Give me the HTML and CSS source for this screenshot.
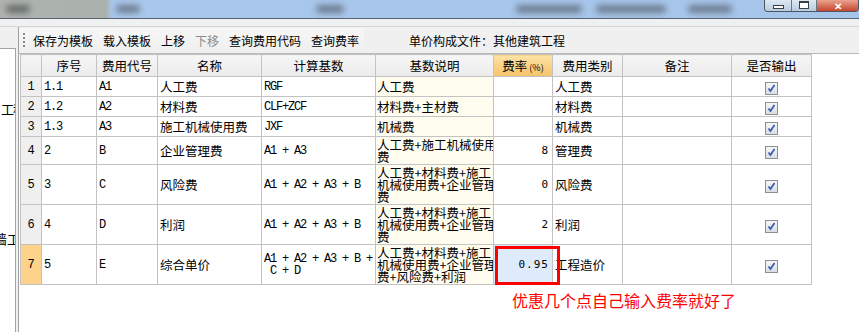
FILE: index.html
```html
<!DOCTYPE html>
<html>
<head>
    <title>单价构成</title>
    <link rel="stylesheet" href="styles.css">
</head>
<body>
    <div class="titlebar">
        <span class="blob b1"></span>
        <span class="blob b2"></span>
        <span class="blob b3"></span>
        <span class="blob b4"></span>
        <span class="blob b5"></span>
        <span class="blob b6"></span>
        <div class="winbtns">
            <span class="wb wb-min"><i></i></span>
            <span class="wb wb-max"><i></i></span>
            <span class="wb wb-close">✕</span>
        </div>
    </div>
    <div class="band"></div>

    <div class="workspace">
        <div class="side">
            <div class="side-box">
                <div class="side-t1">工程</div>
                <div class="side-t2">墙工</div>
            </div>
        </div>

        <div class="main">
            <div class="topbar">
                <div class="toolbar">
                    <span class="grip"></span>
                    <span class="tb">保存为模板</span>
                    <span class="tb">载入模板</span>
                    <span class="tb">上移</span>
                    <span class="tb tb-off">下移</span>
                    <span class="tb">查询费用代码</span>
                    <span class="tb">查询费率</span>
                </div>
                <div class="filename">单价构成文件：其他建筑工程</div>
            </div>

            <div class="grid-area">
                <table class="grid">
                    <colgroup>
                        <col class="c-rn"><col class="c-no"><col class="c-code"><col class="c-name">
                        <col class="c-base"><col class="c-desc"><col class="c-rate"><col class="c-type">
                        <col class="c-note"><col class="c-out">
                    </colgroup>
                    <thead>
                        <tr>
                            <th></th><th>序号</th><th>费用代号</th><th>名称</th><th>计算基数</th>
                            <th>基数说明</th><th class="th-rate">费率<small>(%)</small></th><th>费用类别</th><th>备注</th><th>是否输出</th>
                        </tr>
                    </thead>
                    <tbody>
                        <tr class="r-s1">
                            <td class="rn">1</td><td class="mono">1.1</td><td class="mono">A1</td><td>人工费</td><td class="mono">RGF</td>
                            <td class="desc">人工费</td><td class="rate"></td><td>人工费</td><td></td><td class="chk"><span class="cb"></span></td>
                        </tr>
                        <tr class="r-s2">
                            <td class="rn">2</td><td class="mono">1.2</td><td class="mono">A2</td><td>材料费</td><td class="mono">CLF+ZCF</td>
                            <td class="desc">材料费+主材费</td><td class="rate"></td><td>材料费</td><td></td><td class="chk"><span class="cb"></span></td>
                        </tr>
                        <tr class="r-s3">
                            <td class="rn">3</td><td class="mono">1.3</td><td class="mono">A3</td><td>施工机械使用费</td><td class="mono">JXF</td>
                            <td class="desc">机械费</td><td class="rate"></td><td>机械费</td><td></td><td class="chk"><span class="cb"></span></td>
                        </tr>
                        <tr class="r-m">
                            <td class="rn">4</td><td class="mono">2</td><td class="mono">B</td><td>企业管理费</td><td class="mono">A1 + A3</td>
                            <td class="desc multi">人工费+施工机械使用<br>费</td><td class="rate">8</td><td>管理费</td><td></td><td class="chk"><span class="cb"></span></td>
                        </tr>
                        <tr class="r-l">
                            <td class="rn">5</td><td class="mono">3</td><td class="mono">C</td><td>风险费</td><td class="mono">A1 + A2 + A3 + B</td>
                            <td class="desc multi">人工费+材料费+施工<br>机械使用费+企业管理<br>费</td><td class="rate">0</td><td>风险费</td><td></td><td class="chk"><span class="cb"></span></td>
                        </tr>
                        <tr class="r-l">
                            <td class="rn">6</td><td class="mono">4</td><td class="mono">D</td><td>利润</td><td class="mono">A1 + A2 + A3 + B</td>
                            <td class="desc multi">人工费+材料费+施工<br>机械使用费+企业管理<br>费</td><td class="rate">2</td><td>利润</td><td></td><td class="chk"><span class="cb"></span></td>
                        </tr>
                        <tr class="r-l">
                            <td class="rn rn-cur">7</td><td class="mono">5</td><td class="mono">E</td><td>综合单价</td><td class="mono multi">A1 + A2 + A3 + B +<br>&nbsp;C + D</td>
                            <td class="desc multi">人工费+材料费+施工<br>机械使用费+企业管理<br>费+风险费+利润</td><td class="rate rate-edit">0.95<span class="mark"></span></td><td>工程造价</td><td></td><td class="chk"><span class="cb"></span></td>
                        </tr>
                    </tbody>
                </table>
                <p class="note">优惠几个点自己输入费率就好了</p>
            </div>
        </div>
    </div>
</body>
</html>
```

FILE: styles.css
```css
html, body {
    margin: 0;
    padding: 0;
}
body {
    width: 859px;
    height: 332px;
    overflow: hidden;
    background: #f0f0f0;
    font-family: "Noto Sans CJK SC", "Liberation Sans", sans-serif;
    font-size: 12.5px;
    color: #000;
}

/* window title (blurred) */
.titlebar {
    display: flex;
    align-items: center;
    height: 18px;
    background: linear-gradient(to right, #aeb3ad 0, #aab1ad 106px, #a9c7ec 112px, #a6c5ea 100%);
    position: relative;
    overflow: hidden;
}
.blob {
    display: block;
    height: 8px;
    background: #5f6a78;
    border-radius: 4px;
    filter: blur(3px);
    opacity: .8;
}
.b1 { width: 24px; margin-left: 6px; background: #55595a; }
.b2 { width: 24px; margin-left: 86px; }
.b3 { width: 28px; margin-left: 176px; }
.b4 { width: 66px; margin-left: 172px; }
.b5 { width: 70px; margin-left: 14px; }
.b6 { width: 44px; margin-left: 22px; }
.winbtns {
    display: flex;
    margin-left: auto;
    align-self: flex-start;
    height: 11px;
    border: 1px solid #4d5560;
    border-top: none;
    border-radius: 0 0 4px 4px;
    overflow: hidden;
}
.wb {
    display: flex;
    align-items: center;
    justify-content: center;
    background: linear-gradient(#dfe8f3, #b9cbe0);
    border-right: 1px solid #6c7580;
}
.wb-min { width: 26px; }
.wb-max { width: 24px; }
.wb-min i {
    width: 9px;
    height: 2px;
    border: 1px solid #3a3f45;
    background: #fff;
    margin-top: 2px;
}
.wb-max i {
    width: 8px;
    height: 5px;
    border: 1px solid #3a3f45;
    border-top-width: 2px;
    background: #fff;
    margin-top: -2px;
}
.wb-close {
    width: 41px;
    border-right: none;
    background: linear-gradient(#e8a38f, #c8452e);
    color: #fff;
    font-size: 10px;
    font-weight: bold;
    line-height: 8px;
}
.band {
    height: 7px;
    background: #eef0f2;
    border-top: 1px solid #5d636a;
}

/* workspace */
.workspace {
    display: flex;
    height: 306px;
    border-top: 1px solid #d4d6d9;
}
.side {
    width: 16px;
    padding-top: 21px;
}
.side-box {
    height: 100%;
    background: #fff;
    border-top: 1px solid #a3a3a3;
    border-right: 1px solid #a3a3a3;
    overflow: hidden;
    font-size: 13px;
    white-space: nowrap;
}
.side-t1 {
    margin-top: 50px;
    margin-left: 1px;
    letter-spacing: -1px;
}
.side-t2 {
    margin-top: 111px;
    margin-left: -6px;
}
.main {
    flex: 1;
    margin-left: 2px;
    border-left: 1px solid #a0a0a0;
    display: flex;
    flex-direction: column;
}
.topbar {
    display: flex;
    align-items: center;
    height: 26px;
    background: #f0f0f0;
    border-bottom: 1px solid #b8b8b8;
}
.toolbar {
    display: flex;
    align-items: center;
    gap: 10px;
    height: 24px;
    width: 345px;
    background: linear-gradient(#f7f7f7, #efefef);
    font-size: 12px;
}
.grip {
    width: 2px;
    height: 14px;
    margin-left: 4px;
    margin-right: -2px;
    background: repeating-linear-gradient(#8b8b8b 0, #8b8b8b 2px, transparent 2px, transparent 4px);
}
.tb-off {
    color: #8a8a8a;
}
.filename {
    margin-left: 45px;
    font-size: 12px;
}

/* grid */
.grid-area {
    flex: 1;
    background: #fff;
    padding-left: 1px;
}
.grid {
    border-collapse: collapse;
    table-layout: fixed;
    width: 791px;
}
.c-rn { width: 21px; }
.c-no { width: 55px; }
.c-code { width: 61px; }
.c-name { width: 104px; }
.c-base { width: 114px; }
.c-desc { width: 118px; }
.c-rate { width: 59px; }
.c-type { width: 70px; }
.c-note { width: 109px; }
.c-out { width: 80px; }
.grid th, .grid td {
    border: 1px solid #c3c3c3;
    padding: 0 0 0 2px;
    white-space: nowrap;
    overflow: hidden;
    text-align: left;
    font-weight: normal;
}
.grid th {
    height: 21px;
    text-align: center;
    padding: 0;
    background: linear-gradient(#f6f6f6, #ebebeb);
}
.grid th.th-rate {
    background: linear-gradient(#fde3a6, #f6c169);
}
.th-rate small {
    font-size: 9px;
    margin-left: 2px;
}
.r-s1 td { height: 19px; }
.r-s2 td { height: 18px; }
.r-s3 td { height: 17px; }
.r-m td { height: 27px; }
.r-l td { height: 39px; }
.grid td.rn {
    background: #efefef;
    text-align: center;
    padding: 0;
    font-family: "Liberation Mono", monospace;
    font-size: 12px;
}
.grid td.rn-cur {
    background: #fdd28b;
}
.mono {
    font-family: "Liberation Mono", monospace;
    font-size: 12px;
    letter-spacing: -1.2px;
}
.grid td.desc {
    background: #fffdf0;
    padding-left: 1px;
}
.multi {
    line-height: 12px;
}
.grid td.rate {
    text-align: right;
    padding: 0 4px 0 0;
    font-family: "DejaVu Sans Mono", monospace;
    font-size: 11px;
}
.grid td.rate-edit {
    position: relative;
    overflow: visible;
    background: #ddebfb;
    letter-spacing: 1px;
    padding-right: 3px;
}
.mark {
    position: absolute;
    left: 1px;
    right: -8px;
    top: 1px;
    bottom: -1px;
    border: 3px solid #f00;
}
.grid td.chk {
    text-align: center;
    padding: 0;
}
.cb {
    display: inline-block;
    width: 11px;
    height: 11px;
    border: 1px solid #8e8f8f;
    vertical-align: middle;
    background:
        url("data:image/svg+xml;utf8,<svg xmlns='http://www.w3.org/2000/svg' width='11' height='11'><path d='M2.5 5.5 L4.5 8 L8.5 2' fill='none' stroke='%233a5fb0' stroke-width='1.8'/></svg>") no-repeat center,
        linear-gradient(#f6f6f6, #dadde2);
}
.note {
    margin: 6px 0 0 492px;
    color: #f00;
    font-size: 16px;
    line-height: 18px;
}
```
